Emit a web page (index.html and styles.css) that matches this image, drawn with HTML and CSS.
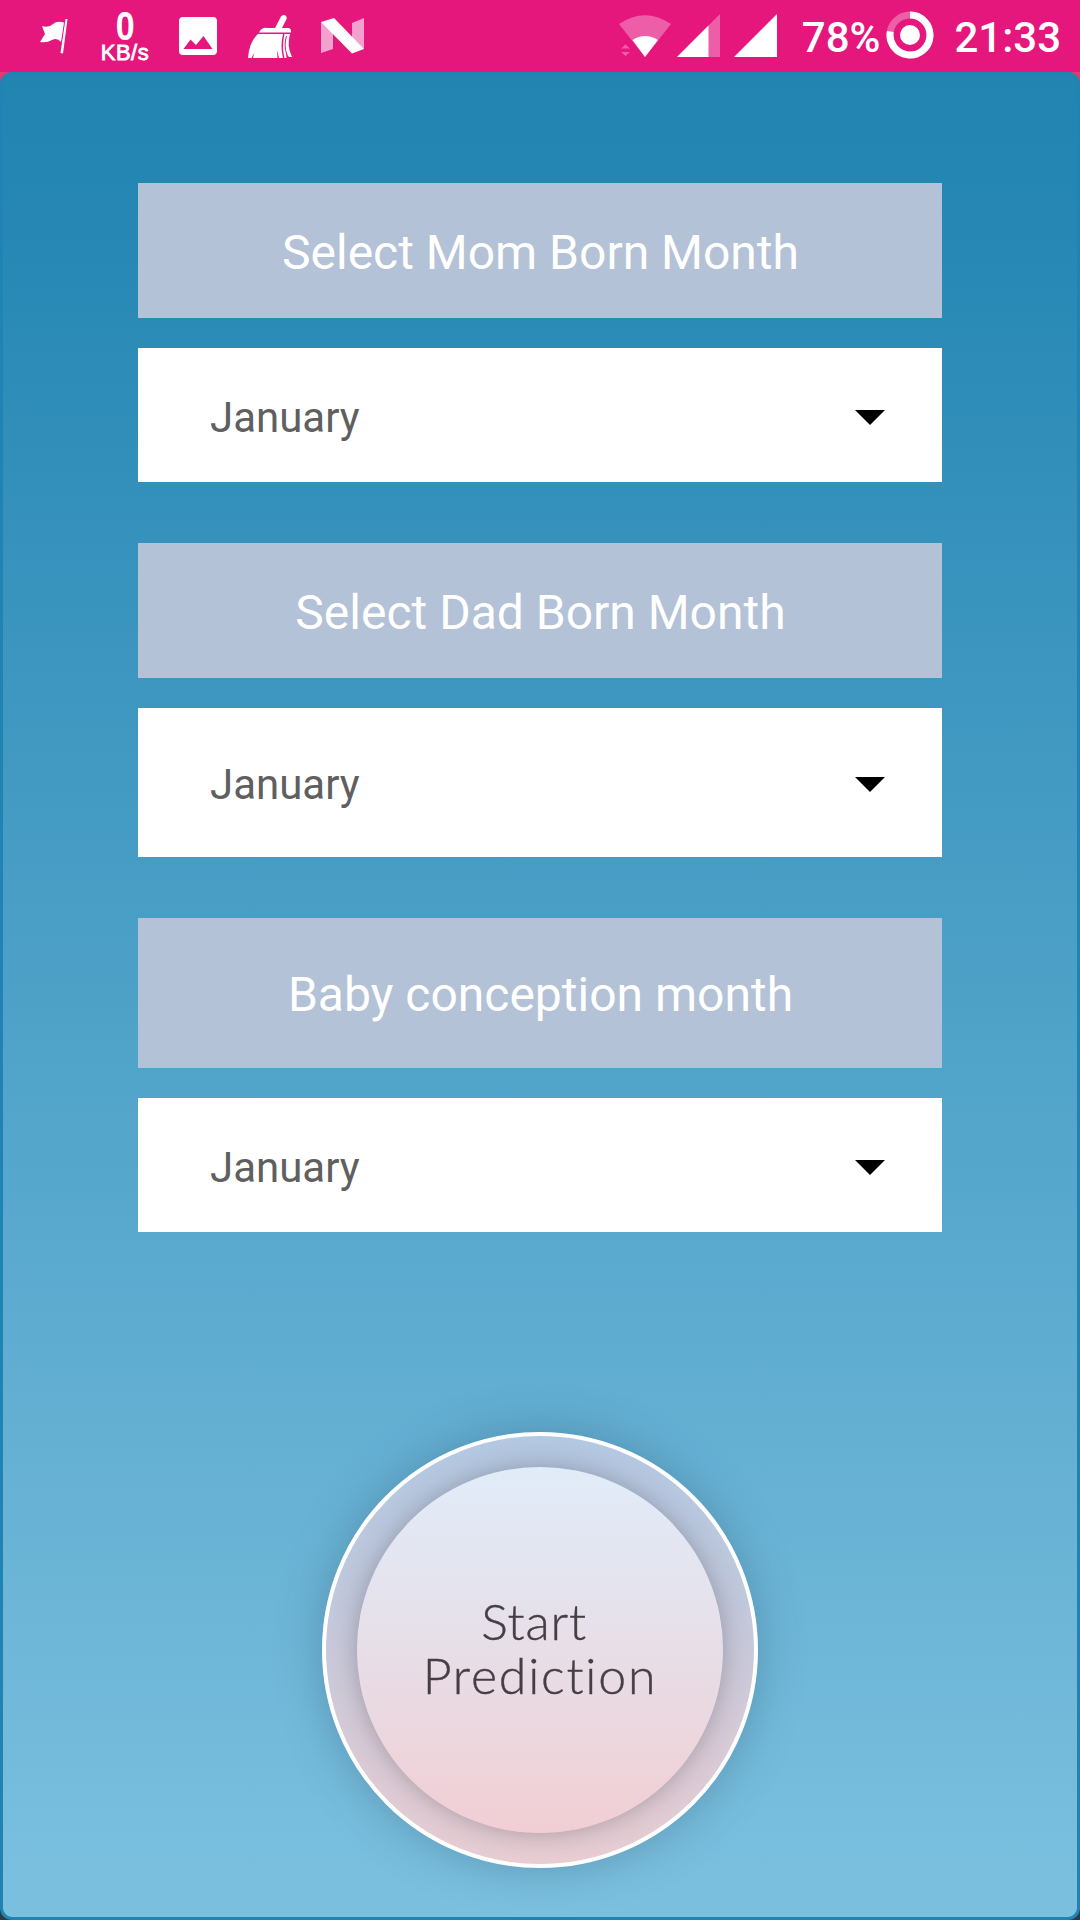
FILE: index.html
```html
<!DOCTYPE html>
<html lang="en">
<head>
    <meta charset="UTF-8">
    <meta name="viewport" content="width=device-width, initial-scale=1.0">
    <title>Baby Prediction</title>

    <link rel="stylesheet" href="styles.css">
</head>

<body>
    <div class="status-bar">
        <div class="status-left">
            <svg class="icon-flag" width="28" height="36" viewBox="0 0 28 36">
                <path d="M2 7 Q9 9 13 5 Q17 1.500 24 3.500 L21 23 Q17 18 12 21 Q7 24 0 23 L5 15 Z" fill="#fff"/>
                <path d="M25.500 0 H27.500 L23 34.500 L20.500 34 Z" fill="#fff"/>
            </svg>
            <div class="net-speed">
                <span class="net-value">0</span>
                <span class="net-unit">KB/s</span>
            </div>
            <svg class="icon-image" width="38" height="38" viewBox="0 0 38 38">
                <path fill-rule="evenodd" d="M4 0 H34 Q38 0 38 4 V34 Q38 38 34 38 H4 Q0 38 0 34 V4 Q0 0 4 0 Z M4.500 32 H33.500 L24.500 19 L17 28 L11.500 22.500 Z" fill="#fff"/>
            </svg>
            <svg class="icon-broom" width="44" height="44" viewBox="0 0 44 44">
                <path d="M33 1.500 Q36 -1 38 1 Q39.500 3 38 5 L34 13 H41 Q43.500 14 43 17.500 H11 Q14 12 19 13 H27 Z" fill="#fff"/>
                <path d="M10 19 H35 Q32 31 35 43 H31 L29 35 L29.500 43 H5 L6 38 L3.500 43 H0 Q1 27 10 19 Z" fill="#fff"/>
                <path d="M36.500 19 H42 Q38.500 31 44 42 L41 42 L38 38 L38.500 43 H36.500 Q33.500 32 36.500 19 Z" fill="#fff"/>
                <path d="M38.500 21 Q35.500 31 39 40" fill="none" stroke="#e6177c" stroke-width="1"/>
            </svg>
            <svg class="icon-n" width="43" height="36" viewBox="0 0 43 36">
                <path d="M0 4 L12 11 V31 L0 35 Z M43 0 V31 L31 24 V5 Z" fill="#f5a1cf"/>
                <path d="M0 4 L13 0 L43 31 L31 35.500 Z" fill="#fff"/>
            </svg>
        </div>
        <div class="status-right">
            <svg class="icon-wifi" width="53" height="43" viewBox="0 0 53 43">
                <path d="M0 9 Q26 -8.500 52 9 L26 42 Z" fill="#ee5da7"/>
                <path d="M13.500 25 Q26 17 39 25 L26 42 Z" fill="#fff"/>
                <path d="M1 34 L6.500 29 L12 34 Z M1 36.500 H12 L6.500 41.500 Z" fill="#ee5da7" stroke="#e6177c" stroke-width="1"/>
            </svg>
            <svg class="icon-signal" width="43" height="43" viewBox="0 0 43 43">
                <path d="M0 43 L43 0 V43 Z" fill="#ee5da7"/>
                <path d="M0 43 L31.500 11.500 V43 Z" fill="#fff"/>
            </svg>
            <svg class="icon-signal-full" width="43" height="43" viewBox="0 0 43 43">
                <path d="M0 43 L43 0 V43 Z" fill="#fff"/>
            </svg>
            <span class="battery-text">78%</span>
            <svg class="icon-battery" width="48" height="48" viewBox="0 0 48 48">
                <circle cx="24" cy="24" r="20" fill="none" stroke="#ee5da7" stroke-width="7"/>
                <path d="M24 4 A20 20 0 1 1 4.300 20.500" fill="none" stroke="#fff" stroke-width="7"/>
                <circle cx="24" cy="24" r="10" fill="#fff"/>
            </svg>
            <span class="time">21:33</span>
        </div>
    </div>

    <div class="screen-bg">
        <div class="screen">
            <form class="form">
                <div class="label">Select Mom Born Month</div>
                <div class="select">
                    <span>January</span>
                    <svg class="arrow" width="30" height="15" viewBox="0 0 30 15"><path d="M0 0 H30 L15 15 Z"/></svg>
                </div>

                <div class="label">Select Dad Born Month</div>
                <div class="select tall">
                    <span>January</span>
                    <svg class="arrow" width="30" height="15" viewBox="0 0 30 15"><path d="M0 0 H30 L15 15 Z"/></svg>
                </div>

                <div class="label tall">Baby conception month</div>
                <div class="select">
                    <span>January</span>
                    <svg class="arrow" width="30" height="15" viewBox="0 0 30 15"><path d="M0 0 H30 L15 15 Z"/></svg>
                </div>
            </form>

            <div class="start-btn">
                <div class="start-inner">
                    <span class="start-word">Start</span>
                    <span class="prediction-word">Prediction</span>
                </div>
            </div>
        </div>
    </div>
</body>
</html>
```
FILE: styles.css
```css
body {
    margin: 0;
    width: 1080px;
    height: 1920px;
    font-family: Roboto, sans-serif;
    overflow: hidden;
}

/* Status bar */
.status-bar {
    height: 72px;
    background-color: #e6177c;
    color: #fff;
    display: flex;
    justify-content: space-between;
    align-items: flex-start;
}

.status-left,
.status-right {
    display: flex;
    align-items: flex-start;
}

.status-left {
    padding-left: 40px;
}

.status-right {
    padding-right: 19px;
}

.icon-flag {
    margin-top: 19px;
}

.net-speed {
    width: 54px;
    margin-left: 30px;
    margin-right: 1px;
    margin-top: 9px;
    display: flex;
    flex-direction: column;
    align-items: center;
    font-family: "Liberation Sans", Arial, sans-serif;
}

.net-value {
    font-weight: bold;
    font-size: 40px;
    line-height: 34px;
    transform: scaleX(0.85);
}

.net-unit {
    font-size: 22px;
    line-height: 20px;
    letter-spacing: 0.5px;
    -webkit-text-stroke: 0.8px #fff;
}

.icon-image {
    margin-top: 17px;
    margin-left: 26px;
}

.icon-broom {
    margin-top: 15px;
    margin-left: 31px;
}

.icon-n {
    margin-top: 18px;
    margin-left: 29px;
}

.icon-wifi {
    margin-top: 15px;
}

.icon-signal {
    margin-top: 14px;
    margin-left: 5px;
}

.icon-signal-full {
    margin-top: 14px;
    margin-left: 14px;
}

.battery-text,
.time {
    font-size: 42px;
    font-weight: 500;
    line-height: 50px;
    margin-top: 13px;
}

.battery-text {
    margin-left: 25px;
}

.icon-battery {
    margin-top: 11px;
    margin-left: 6px;
}

.time {
    margin-left: 20px;
}

/* Main screen */
.screen-bg {
    height: 1848px;
    background: linear-gradient(#e8386c 50%, #2c3a45 50%);
}

.screen {
    height: 1848px;
    box-sizing: border-box;
    border: 3px solid #1f83b3;
    border-radius: 12px;
    background: linear-gradient(#2285b1 0%, #2486b3 6%, #7cc0df 100%);
    display: flex;
    flex-direction: column;
    align-items: center;
}

.form {
    width: 804px;
    margin-top: 108px;
}

.label,
.select {
    box-sizing: border-box;
    height: 135px;
    display: flex;
    align-items: center;
}

.label {
    justify-content: center;
    padding-top: 4px;
    padding-left: 1px;
    background-color: #b3c2d6;
    color: #fff;
    font-size: 48px;
    margin-bottom: 30px;
}

.label.tall {
    height: 150px;
    padding-top: 2px;
}

.select {
    height: 134px;
    justify-content: space-between;
    padding: 5px 57px 0 72px;
    background-color: #fff;
    color: #5f5f5f;
    font-size: 42px;
    margin-bottom: 61px;
}

.select.tall {
    height: 149px;
    padding-top: 3px;
}

/* Start button */
.start-btn {
    box-sizing: border-box;
    width: 436px;
    height: 436px;
    margin-top: 139px;
    border: 4px solid #fff;
    border-radius: 50%;
    background: linear-gradient(#b3c8e2 0%, #bfc8dc 35%, #e8ccd2 100%);
    box-shadow: 0 0 45px rgba(50, 80, 110, 0.35);
    display: flex;
    align-items: center;
    justify-content: center;
}

.start-inner {
    box-sizing: border-box;
    width: 366px;
    height: 366px;
    padding-bottom: 4px;
    border-radius: 50%;
    background: linear-gradient(#e1ecf9 0%, #e6e0e9 45%, #f1ced4 100%);
    box-shadow: 0 0 24px rgba(80, 70, 80, 0.38);
    display: flex;
    flex-direction: column;
    align-items: center;
    justify-content: center;
    font-family: Lato, sans-serif;
    font-weight: 300;
    font-size: 50px;
    line-height: 54px;
    font-variant-ligatures: none;
    color: #463e44;
    -webkit-text-stroke: 0.4px #463e44;
}

.start-word {
    margin-right: 12px;
    letter-spacing: 0.8px;
}

.prediction-word {
    letter-spacing: 1.8px;
}
```
